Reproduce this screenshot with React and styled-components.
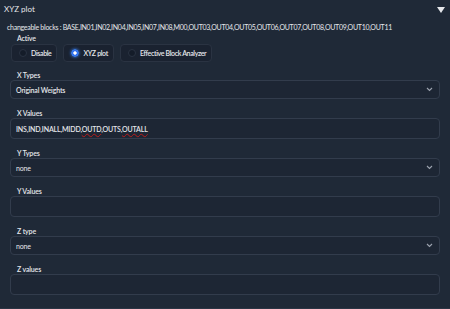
import React from "react";
import styled, { createGlobalStyle } from "styled-components";

const Global = createGlobalStyle`
  html, body { margin: 0; padding: 0; background: #1f2937; }
  body { font-family: Lato, "Noto Sans", sans-serif; color: #e5e7eb; }
  * { box-sizing: border-box; }
`;

const Panel = styled.div`
  width: 450px;
  height: 309px;
  background: #1f2937;
  border-bottom: 1px solid #2b3544;
  overflow: hidden;
`;

const Header = styled.div`
  display: flex;
  align-items: center;
  justify-content: space-between;
  height: 17px;
  padding: 1px 5px 0 4px;
`;

const Title = styled.span`
  font-size: 8px;
  color: #e5e7eb;
`;

const Caret = styled.span`
  width: 0;
  height: 0;
  border-left: 4px solid transparent;
  border-right: 4px solid transparent;
  border-top: 6px solid #e5e7eb;
  margin-top: 1px;
`;

const Info = styled.div`
  font-size: 7px;
  letter-spacing: -0.28px;
  padding: 3px 0 0 7px;
  height: 14px;
  line-height: 14px;
  color: #e5e7eb;
  white-space: nowrap;
`;

const Body = styled.div`
  display: flex;
  flex-direction: column;
  padding: 2px 10px 0 10px;
`;

const Field = styled.div`
  display: flex;
  flex-direction: column;
  margin-bottom: ${(p) => p.$gap ?? 9}px;
`;

const Label = styled.div`
  font-size: 7px;
  letter-spacing: -0.15px;
  line-height: 10px;
  height: 10px;
  padding-left: 7px;
  color: #e5e7eb;
  font-weight: 600;
  margin-top: ${(p) => p.$top ?? 0}px;
`;

const RadioRow = styled.div`
  display: flex;
  gap: 6px;
  padding-left: 1px;
  margin-top: 1px;
`;

const RadioItem = styled.div`
  display: flex;
  align-items: center;
  gap: 4px;
  height: 18px;
  padding: 0 5px 0 7px;
  background: #1a2230;
  border: 1px solid #2a3342;
  border-radius: 4px;
  font-size: 7px;
  letter-spacing: -0.35px;
  font-weight: 600;
  color: #e5e7eb;
`;

const Dot = styled.span`
  width: 8px;
  height: 8px;
  border-radius: 50%;
  background: ${(p) =>
    p.$on
      ? "radial-gradient(circle, #ffffff 0 1.4px, #2f6ff0 1.9px)"
      : "#141c29"};
  border: 1px solid ${(p) => (p.$on ? "#3b82f6" : "#2a3342")};
  box-shadow: ${(p) => (p.$on ? "0 0 3px #3b82f6" : "none")};
`;

const Box = styled.div`
  display: flex;
  align-items: center;
  justify-content: space-between;
  height: ${(p) => p.$h}px;
  padding: 0 6px 0 5px;
  background: #1d2634;
  border: 1px solid #323c4c;
  border-radius: 4px;
  font-size: 7px;
  letter-spacing: -0.15px;
  color: #e5e7eb;
  font-weight: ${(p) => (p.$bold ? 600 : 400)};
`;

const Value = styled.span`
  white-space: nowrap;
`;

const Squiggle = styled.span`
  text-decoration: underline wavy #b91c1c;
  text-decoration-thickness: 0.5px;
  text-underline-offset: 1px;
`;

const Chevron = () => (
  <svg width="7" height="5" viewBox="0 0 7 5">
    <path d="M1 1 L3.5 3.5 L6 1" stroke="#9ca3af" strokeWidth="1.1" fill="none" />
  </svg>
);

const Select = ({ value, bold }) => (
  <Box $h={19} $bold={bold}>
    <Value>{value}</Value>
    <Chevron />
  </Box>
);

export default function App() {
  return (
    <>
      <Global />
      <Panel>
        <Header>
          <Title>XYZ plot</Title>
          <Caret />
        </Header>
        <Info>
          changeable blocks : BASE,IN01,IN02,IN04,IN05,IN07,IN08,M00,OUT03,OUT04,OUT05,OUT06,OUT07,OUT08,OUT09,OUT10,OUT11
        </Info>
        <Body>
          <Field $gap={7}>
            <Label>Active</Label>
            <RadioRow>
              <RadioItem>
                <Dot />
                Disable
              </RadioItem>
              <RadioItem>
                <Dot $on />
                XYZ plot
              </RadioItem>
              <RadioItem>
                <Dot />
                Effective Block Analyzer
              </RadioItem>
            </RadioRow>
          </Field>
          <Field>
            <Label $top={1}>X Types</Label>
            <Select value="Original Weights" bold />
          </Field>
          <Field>
            <Label>X Values</Label>
            <Box $h={21} $bold>
              <Value>
                INS,IND,INALL,MIDD,<Squiggle>OUTD</Squiggle>,OUTS,<Squiggle>OUTALL</Squiggle>
              </Value>
            </Box>
          </Field>
          <Field>
            <Label>Y Types</Label>
            <Select value="none" />
          </Field>
          <Field>
            <Label>Y Values</Label>
            <Box $h={21} />
          </Field>
          <Field>
            <Label>Z type</Label>
            <Select value="none" />
          </Field>
          <Field>
            <Label>Z values</Label>
            <Box $h={21} />
          </Field>
        </Body>
      </Panel>
    </>
  );
}
